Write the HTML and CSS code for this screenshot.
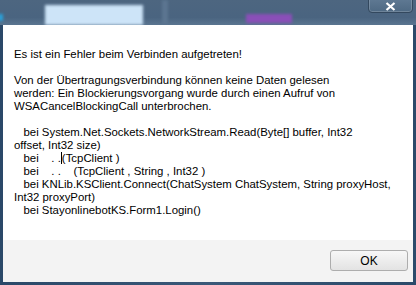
FILE: index.html
```html
<!DOCTYPE html>
<html lang="de">
<head>
      <meta charset="UTF-8">
      <title>Fehler</title>
      <link rel="stylesheet" href="styles.css">
</head>
<body>
      <div class="window">
            <header class="titlebar">
                  <span class="blur blur-edge"></span>
                  <span class="blur blur-box"></span>
                  <span class="blur blur-purple"></span>
                  <span class="blur blur-line"></span>
                  <button class="close" aria-label="Schließen">
                        <svg width="11" height="9" viewBox="0 0 11 9">
                              <path d="M1.5 1 L9.5 8 M9.5 1 L1.5 8" stroke="#fff" stroke-width="2.2" fill="none"/>
                        </svg>
                  </button>
            </header>
            <main class="dialog">
                  <section class="message">
<p>Es ist ein Fehler beim Verbinden aufgetreten!</p>
<p>Von der Übertragungsverbindung können keine Daten gelesen
werden: Ein Blockierungsvorgang wurde durch einen Aufruf von
WSACancelBlockingCall unterbrochen.</p>
<p>   bei System.Net.Sockets.NetworkStream.Read(Byte[] buffer, Int32
offset, Int32 size)
   bei    . .<span class="caret"></span>(TcpClient )
   bei    . .    (TcpClient , String , Int32 )
   bei KNLib.KSClient.Connect(ChatSystem ChatSystem, String proxyHost,
Int32 proxyPort)
   bei StayonlinebotKS.Form1.Login()</p>
                  </section>
                  <footer class="buttons">
                        <button class="btn">OK</button>
                  </footer>
            </main>
      </div>
</body>
</html>
```

FILE: styles.css
```css
html, body{
      margin: 0;
      padding: 0;
}
body{
      width: 416px;
      height: 285px;
      overflow: hidden;
      background: #243f5c;
      font-family: "Liberation Sans", Arial, sans-serif;
}
.window{
      display: flex;
      flex-direction: column;
      height: 285px;
      background: linear-gradient(90deg, #2a4868 0, #3a5878 50%, #2b4a6a 100%);
}
.titlebar{
      position: relative;
      height: 25px;
      flex: none;
      overflow: hidden;
      background: linear-gradient(180deg, #4d6680 0, #4a6480 70%, #5a7590 100%);
}
.blur{
      position: absolute;
      filter: blur(1.5px);
}
.blur-edge{
      left: -2px;
      top: 14px;
      width: 5px;
      height: 7px;
      background: #2aa0d8;
}
.blur-box{
      left: 45px;
      top: 5px;
      width: 98px;
      height: 20px;
      background: #cde4f8;
}
.blur-purple{
      left: 246px;
      top: 14px;
      width: 46px;
      height: 9px;
      background: #8a4fb8;
}
.blur-line{
      left: 162px;
      top: 0;
      width: 6px;
      height: 25px;
      background: #5c7590;
}
.close{
      position: absolute;
      right: 3px;
      top: -2px;
      width: 45px;
      height: 15px;
      padding: 2px 0 0;
      border: 1px solid #33485e;
      border-radius: 0 0 4px 4px;
      background: linear-gradient(180deg, #5f7993, #4e6983);
      box-shadow: inset 0 0 0 1px rgba(255,255,255,.18);
      display: flex;
      align-items: center;
      justify-content: center;
}
.dialog{
      flex: 1;
      margin: 0 3px 3px;
      display: flex;
      flex-direction: column;
      background: #fff;
}
.message{
      flex: 1;
      padding: 23px 11px 0;
      font-size: 11.4px;
      line-height: 13px;
      color: #000;
}
.message p{
      margin: 0 0 13px;
      white-space: pre;
}
.caret{
      display: inline-block;
      width: 1px;
      height: 12px;
      vertical-align: -2px;
      background: #000;
}
.buttons{
      height: 42px;
      flex: none;
      background: #f3f3f3;
      display: flex;
      justify-content: flex-end;
      align-items: flex-start;
      padding: 10px 5px 0 0;
      box-sizing: border-box;
}
.btn{
      width: 78px;
      height: 21px;
      border: 1px solid #adadad;
      border-radius: 3px;
      background: linear-gradient(180deg, #f7f7f7 0, #ededed 50%, #e3e3e3 100%);
      font-family: "Liberation Sans", Arial, sans-serif;
      font-size: 12px;
      color: #000;
      padding: 0;
}
```
